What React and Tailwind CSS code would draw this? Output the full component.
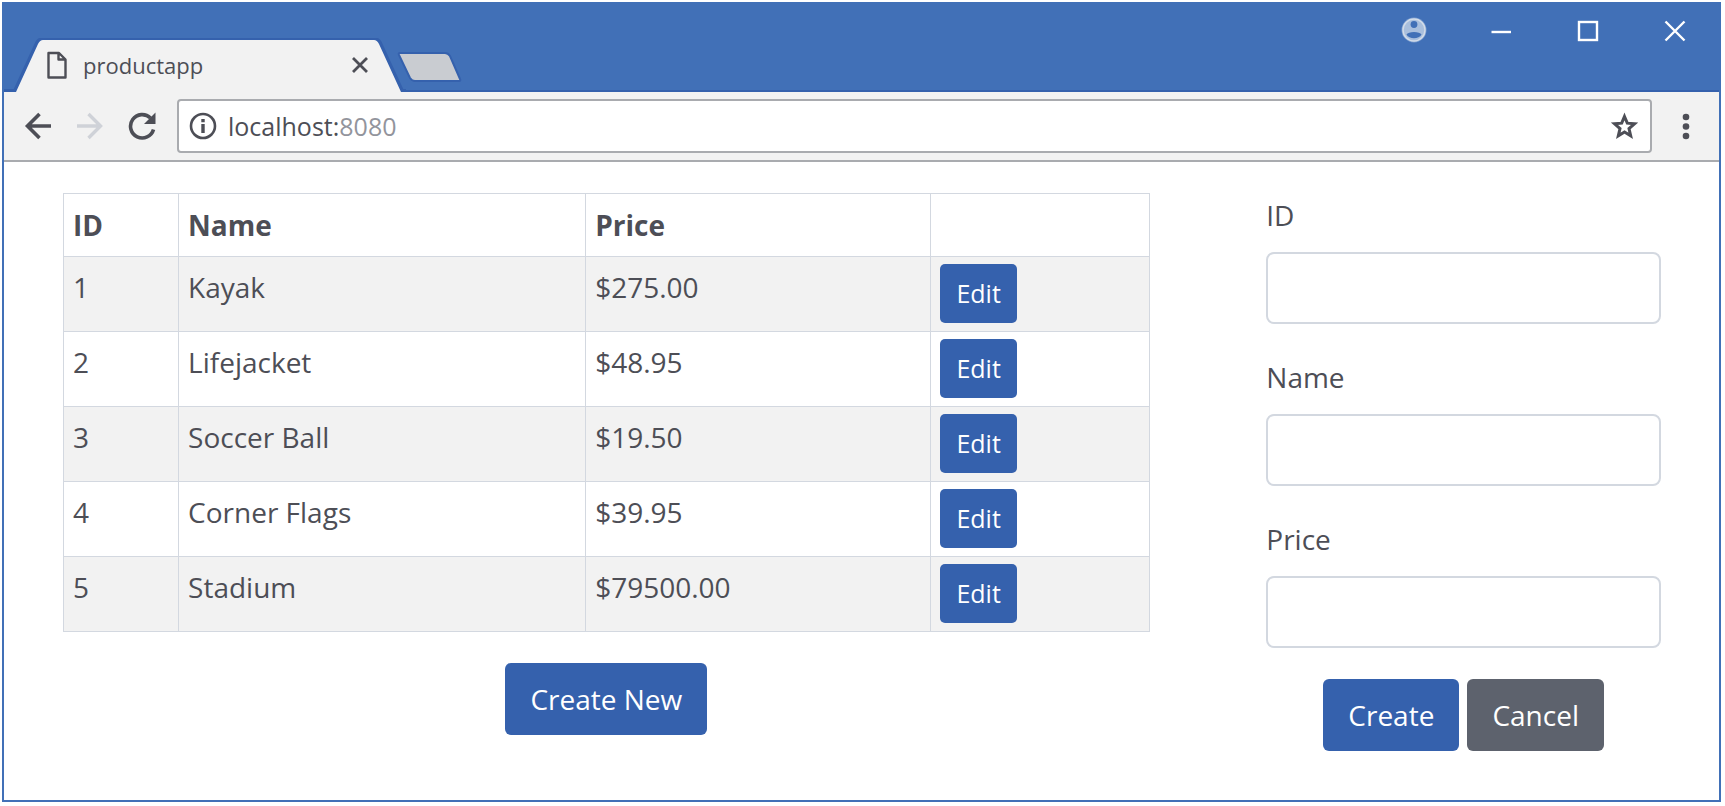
import React from "react";

const products = [
  { id: 1, name: "Kayak", price: "$275.00" },
  { id: 2, name: "Lifejacket", price: "$48.95" },
  { id: 3, name: "Soccer Ball", price: "$19.50" },
  { id: 4, name: "Corner Flags", price: "$39.95" },
  { id: 5, name: "Stadium", price: "$79500.00" },
];

function TitleBar() {
  return (
    <header className="flex h-[90px] items-end justify-between border-b-2 border-[#3561ad] bg-[#4170b7]">
      <div className="relative -mb-[2px] flex h-[54px] min-w-0 items-start">
        <svg className="absolute left-0 top-0 h-[54px] w-[470px]" viewBox="0 0 470 54" aria-hidden="true">
          <path d="M0 53H11L33 5Q35 1 39 1H370Q374 1 376 5L398 53H402" fill="none" stroke="#3561ad" strokeWidth="4" />
          <path d="M0 54H12L34 6Q36 2 39 2H370Q373 2 375 6L397 54Z" fill="#f2f2f2" />
          <path d="M396 15H441Q444 15 446 18L456 41Q457 43 455 43H411Q408 43 406 40L395 17Q394 15 396 15Z" fill="#c9ccd1" stroke="#3561ad" strokeWidth="2" />
        </svg>
        <div className="relative flex h-full w-[400px] items-center pl-[43px] pr-8">
          <svg className="h-7 w-5" viewBox="0 0 20 28" fill="none" stroke="#4d4e56" strokeWidth="2.4" strokeLinejoin="round" aria-hidden="true">
            <path d="M1.5 2H12L18.5 8.5V26.5H1.5ZM11.5 2.5V8.5H18" />
          </svg>
          <span className="ml-4 flex-1 text-[22px] leading-8">productapp</span>
          <button type="button" aria-label="Close tab" className="flex h-6 w-6 items-center justify-center">
            <svg className="h-4 w-4" viewBox="0 0 16 16" stroke="#4d4e56" strokeWidth="2.8" aria-hidden="true">
              <path d="M1 1L15 15M15 1L1 15" />
            </svg>
          </button>
        </div>
      </div>
      <div className="flex h-full items-start gap-[59px] pr-[30px] pt-[14px]">
        <button type="button" aria-label="Profile">
          <svg className="h-7 w-7" viewBox="0 0 28 28" aria-hidden="true">
            <circle cx="14" cy="14" r="12.5" fill="#7d9fd0" />
            <circle cx="14" cy="14" r="11" fill="#a9bfdd" stroke="#d3dce8" strokeWidth="1.5" />
            <circle cx="14" cy="8.5" r="3.4" fill="#4170b7" />
            <path d="M6.500 18.500C8 15 20 15 21.500 18.500C19 23.500 9 23.500 6.500 18.500Z" fill="#4170b7" />
          </svg>
        </button>
        <button type="button" aria-label="Minimize">
          <svg className="h-7 w-7" viewBox="0 0 28 28" stroke="#fff" strokeWidth="2.4" aria-hidden="true"><path d="M4.500 16H24" /></svg>
        </button>
        <button type="button" aria-label="Maximize">
          <svg className="h-7 w-7" viewBox="0 0 28 28" fill="none" stroke="#fff" strokeWidth="2.4" aria-hidden="true"><rect x="5" y="6" width="18" height="18" /></svg>
        </button>
        <button type="button" aria-label="Close window">
          <svg className="h-7 w-7" viewBox="0 0 28 28" stroke="#fff" strokeWidth="2.4" aria-hidden="true"><path d="M4.500 5.500L23.500 24.500M23.500 5.500L4.500 24.500" /></svg>
        </button>
      </div>
    </header>
  );
}

function Toolbar() {
  return (
    <nav className="flex h-[70px] items-center border-b-2 border-[#a9abaf] bg-[#f2f2f2] pl-5 pr-[29px]">
      <div className="flex items-center gap-6">
        <button type="button" aria-label="Back">
          <svg className="h-7 w-7" viewBox="0 0 28 28" fill="none" stroke="#4d4e56" strokeWidth="3.6" aria-hidden="true"><path d="M27 14H4M15.5 2L3.5 14L15.5 26" /></svg>
        </button>
        <button type="button" aria-label="Forward">
          <svg className="h-7 w-7" viewBox="0 0 28 28" fill="none" stroke="#cfd2d8" strokeWidth="3.4" aria-hidden="true"><path d="M1 14H24M12.5 2L24.5 14L12.5 26" /></svg>
        </button>
        <button type="button" aria-label="Reload">
          <svg className="h-7 w-7" viewBox="0 0 28 28" aria-hidden="true">
            <path d="M25.5 17.5A11.7 11.7 0 1 1 22.5 6" fill="none" stroke="#4d4e56" strokeWidth="3.6" />
            <path d="M27.5 0.5V12H16Z" fill="#4d4e56" />
          </svg>
        </button>
      </div>
      <div className="ml-[21px] flex h-[54px] min-w-0 flex-1 items-center rounded border-2 border-[#a9abaf] bg-white pl-[10px] pr-3">
        <svg className="h-7 w-7 shrink-0" viewBox="0 0 28 28" aria-hidden="true">
          <circle cx="14" cy="14" r="12" fill="none" stroke="#4d4e56" strokeWidth="2.6" />
          <path d="M12.3 7H15.7V10.3H12.3ZM12.3 12H15.7V21H12.3Z" fill="#4d4e56" />
        </svg>
        <a href="#" className="ml-[11px] flex-1 text-[25px]">localhost:<span className="text-[#92949c]">8080</span></a>
        <button type="button" aria-label="Bookmark">
          <svg className="h-7 w-7" viewBox="0 0 28 28" fill="none" stroke="#4d4e56" strokeWidth="3" aria-hidden="true">
            <path d="M14.5 4.5L17.3 11.2L24.5 11.8L19 16.6L20.7 23.8L14.5 20L8.3 23.8L10 16.6L4.5 11.8L11.7 11.2Z" />
          </svg>
        </button>
      </div>
      <button type="button" aria-label="Menu" className="ml-[30px]">
        <svg className="h-7 w-2" viewBox="0 0 8 28" fill="#4d4e56" aria-hidden="true"><circle cx="4" cy="5" r="3.3" /><circle cx="4" cy="14.5" r="3.3" /><circle cx="4" cy="24" r="3.3" /></svg>
      </button>
    </nav>
  );
}

function ProductTable() {
  return (
    <table className="w-full table-fixed border-collapse border border-[#d3d8e0] text-left align-top">
      <colgroup>
        <col className="w-[10.6%]" />
        <col className="w-[37.5%]" />
        <col className="w-[31.8%]" />
        <col />
      </colgroup>
      <thead>
        <tr className="h-[63px] font-bold">
          <th scope="col" className="border border-[#d3d8e0] px-[9px]">ID</th>
          <th scope="col" className="border border-[#d3d8e0] px-[9px]">Name</th>
          <th scope="col" className="border border-[#d3d8e0] px-[9px]">Price</th>
          <td className="border border-[#d3d8e0] px-[9px]"></td>
        </tr>
      </thead>
      <tbody>
        {products.map((p) => (
          <tr key={p.id} className="h-[75px] align-top odd:bg-[#f2f2f2]">
            <td className="border border-[#d3d8e0] px-[9px] pt-2">{p.id}</td>
            <td className="border border-[#d3d8e0] px-[9px] pt-2">{p.name}</td>
            <td className="border border-[#d3d8e0] px-[9px] pt-2">{p.price}</td>
            <td className="border border-[#d3d8e0] px-[9px] pt-[7px]">
              <button type="button" className="block h-[59px] rounded-[5px] bg-[#3561ad] px-4 text-[25px] text-white">Edit</button>
            </td>
          </tr>
        ))}
      </tbody>
    </table>
  );
}

function Field({ id, label }) {
  return (
    <div className="flex flex-col">
      <label htmlFor={id} className="pb-[14px]">{label}</label>
      <input id={id} type="text" className="h-[72px] w-full rounded-lg border-2 border-[#d3d8e0] bg-white px-5 outline-none" />
    </div>
  );
}

export default function App() {
  return (
    <div className="min-h-screen bg-white p-[2px] pb-1 pr-1 font-['Open_Sans','Noto_Sans',sans-serif] text-[28px] leading-[45px] text-[#4d4e56]">
      <div className="flex min-h-[800px] flex-col border-2 border-t-0 border-[#4170b7]">
        <TitleBar />
        <Toolbar />
        <main className="grid grid-cols-[68%_24.7%] justify-between pl-[59px] pr-[58px] pt-[31px]">
          <section className="flex flex-col items-center gap-[31px]">
            <ProductTable />
            <button type="button" className="h-[72px] rounded-md bg-[#3561ad] px-[25px] text-white">Create New</button>
          </section>
          <form className="flex flex-col gap-[31px]">
            <Field id="product-id" label="ID" />
            <Field id="product-name" label="Name" />
            <Field id="product-price" label="Price" />
            <div className="flex justify-center gap-2">
              <button type="button" className="h-[72px] rounded-md bg-[#3561ad] px-[25px] text-white">Create</button>
              <button type="button" className="h-[72px] rounded-md bg-[#5d626d] px-[25px] text-white">Cancel</button>
            </div>
          </form>
        </main>
      </div>
    </div>
  );
}
